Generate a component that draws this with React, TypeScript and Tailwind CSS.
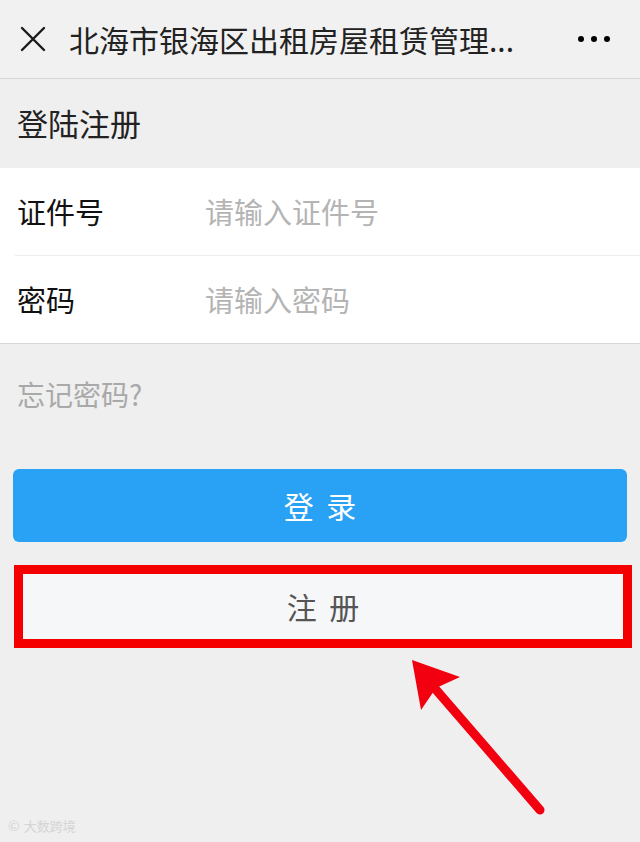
import React from 'react'

const font = { fontFamily: '"Noto Sans CJK SC", "Noto Sans", sans-serif' }

function Row({ label, placeholder }: { label: string; placeholder: string }) {
    return (
        <div className="flex h-[87px] items-center px-[17px]">
            <span className="w-[188px] text-[29px] text-[#111]">{label}</span>
            <span className="text-[29px] text-[#b4b4b4]">{placeholder}</span>
        </div>
    )
}

export default function App() {
    return (
        <div className="relative min-h-[842px] w-[640px] overflow-hidden bg-[#efefef]" style={font}>
            {/* top bar */}
            <div className="flex h-[79px] items-center border-b border-[#d6d6d6] bg-[#f1f1f1] pl-[20px] pr-[30px]">
                <svg width="26" height="26" viewBox="0 0 26 26" className="shrink-0">
                    <path d="M2 2 L24 24 M24 2 L2 24" stroke="#1a1a1a" strokeWidth="2.4" strokeLinecap="round" />
                </svg>
                <span className="ml-[23px] flex-1 truncate text-[30px] text-[#222]">北海市银海区出租房屋租赁管理...</span>
                <div className="flex gap-[7px]">
                    <span className="h-[6px] w-[6px] rounded-full bg-black" />
                    <span className="h-[6px] w-[6px] rounded-full bg-black" />
                    <span className="h-[6px] w-[6px] rounded-full bg-black" />
                </div>
            </div>

            {/* section title */}
            <div className="flex h-[89px] items-center px-[17px]">
                <span className="text-[31px] text-[#222]">登陆注册</span>
            </div>

            {/* form */}
            <div className="border-b border-[#d6d6d6] bg-white">
                <Row label="证件号" placeholder="请输入证件号" />
                <div className="ml-[15px] h-px bg-[#ececec]" />
                <Row label="密码" placeholder="请输入密码" />
            </div>

            <div className="mt-[28px] px-[17px] text-[28px] leading-[44px] text-[#a9a9a9]">忘记密码?</div>

            <div className="mx-[13px] mt-[53px] flex h-[73px] items-center justify-center rounded-[6px] bg-[#29a2f6] pl-[3px] text-[30px] tracking-[3px] text-white">
                登 录
            </div>

            <div className="ml-[14px] mt-[23px] h-[83px] w-[618px] border-[9px] border-[#f40000]">
                <div className="flex h-full items-center justify-center bg-[#f6f7f9] pl-[3px] text-[30px] tracking-[3px] text-[#555]">
                    注 册
                </div>
            </div>

            {/* arrow */}
            <svg className="absolute left-0 top-0" width="640" height="842" viewBox="0 0 640 842">
                <line x1="540" y1="810" x2="425" y2="677" stroke="#f20010" strokeWidth="9" strokeLinecap="round" />
                <polygon points="412,660 460,677 436,688 421,710" fill="#f20010" />
            </svg>

            {/* watermark */}
            <div className="absolute bottom-[6px] left-[8px] flex items-center gap-[4px] text-[13px] text-[#d4d4d4]">
                <span className="text-[14px]">©</span>
                <span>大数跨境</span>
            </div>
        </div>
    )
}
